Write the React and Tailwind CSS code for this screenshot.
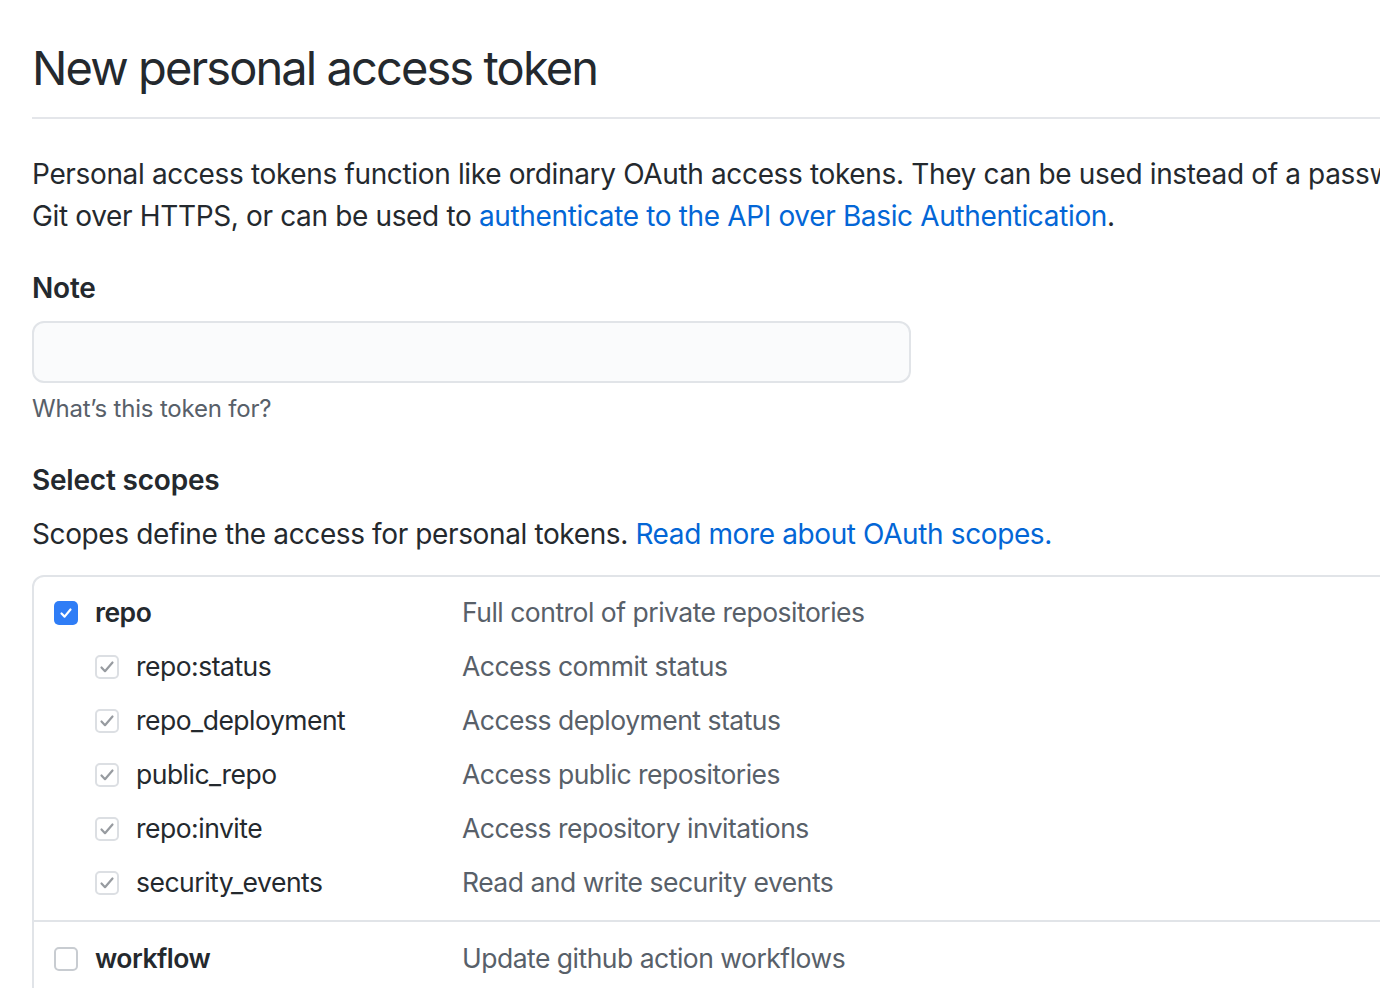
import React from "react";

const font = { fontFamily: "Inter, 'Noto Sans', sans-serif" };

function BlueCheck() {
  return (
    <span className="flex h-[24px] w-[24px] shrink-0 items-center justify-center rounded-[5px] bg-[#2f7df6]">
      <svg width="16" height="16" viewBox="0 0 16 16" fill="none">
        <path d="M3.5 8.5 L6.6 11.6 L12.5 4.5" stroke="white" strokeWidth="2.2" strokeLinecap="round" strokeLinejoin="round" />
      </svg>
    </span>
  );
}

function GrayCheck() {
  return (
    <span className="flex h-[24px] w-[24px] shrink-0 items-center justify-center rounded-[5px] border-2 border-[#dcdfe3] bg-white">
      <svg width="18" height="18" viewBox="0 0 18 18" fill="none">
        <path d="M3.5 9.5 L7 13.2 L14.5 4.5" stroke="#979ba0" strokeWidth="2.2" strokeLinecap="round" strokeLinejoin="round" />
      </svg>
    </span>
  );
}

function EmptyCheck() {
  return <span className="block h-[24px] w-[24px] shrink-0 rounded-[5px] border-2 border-[#c8ccd1] bg-white" />;
}

const subs = [
  ["repo:status", "Access commit status"],
  ["repo_deployment", "Access deployment status"],
  ["public_repo", "Access public repositories"],
  ["repo:invite", "Access repository invitations"],
  ["security_events", "Read and write security events"],
];

export default function App() {
  return (
    <div className="h-[988px] w-[1380px] overflow-hidden bg-white text-[#24292e]" style={font}>
      <div className="w-[1800px] pl-[32px]">
        <div className="border-b-2 border-[#e4e6ea] pt-[38px] pb-[19px]">
          <h1 className="text-[47px] leading-[60px] font-normal tracking-[-1.9px]">New personal access token</h1>
        </div>

        <p className="mt-[34px] text-[28px] leading-[42px] tracking-[-0.35px] whitespace-nowrap">
          Personal access tokens function like ordinary OAuth access tokens. They can be used instead of a password for
          <br />
          Git over HTTPS, or can be used to <span className="text-[#0366d6]">authenticate to the API over Basic Authentication</span>.
        </p>

        <div className="mt-[30px] text-[28px] leading-[42px] font-semibold tracking-[-0.2px]">Note</div>
        <div className="mt-[12px] h-[62px] w-[879px] rounded-[12px] border-2 border-[#e1e4e8] bg-[#fafbfc]" />
        <div className="mt-[8px] text-[24px] leading-[36px] tracking-[-0.2px] text-[#586069]">What’s this token for?</div>

        <div className="mt-[32px] text-[28px] leading-[42px] font-semibold tracking-[-0.2px]">Select scopes</div>
        <p className="mt-[12px] text-[28px] leading-[42px] tracking-[-0.38px]">
          Scopes define the access for personal tokens. <span className="text-[#0366d6]">Read more about OAuth scopes.</span>
        </p>

        <div className="mt-[20px] rounded-tl-[12px] border-2 border-[#e1e4e8] text-[26.5px] tracking-[-0.5px]">
          <div className="pt-[9px] pb-[10px]">
            <div className="flex h-[54px] items-center pl-[20px]">
              <BlueCheck />
              <span className="ml-[17px] w-[367px] font-semibold">repo</span>
              <span className="text-[#586069]">Full control of private repositories</span>
            </div>
            {subs.map(([n, d]) => (
              <div key={n} className="flex h-[54px] items-center pl-[61px]">
                <GrayCheck />
                <span className="ml-[17px] w-[326px]">{n}</span>
                <span className="text-[#586069]">{d}</span>
              </div>
            ))}
          </div>
          <div className="border-t-2 border-[#e1e4e8] pt-[10px] pb-[20px]">
            <div className="flex h-[54px] items-center pl-[20px]">
              <EmptyCheck />
              <span className="ml-[17px] w-[367px] font-semibold">workflow</span>
              <span className="text-[#586069]">Update github action workflows</span>
            </div>
          </div>
        </div>
      </div>
    </div>
  );
}
